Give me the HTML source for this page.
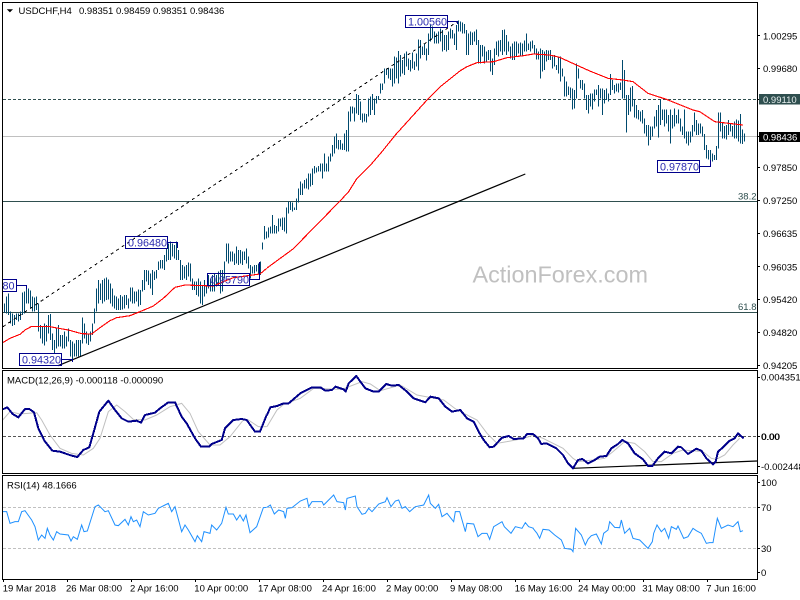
<!DOCTYPE html>
<html><head><meta charset="utf-8"><title>USDCHF,H4</title>
<style>
html,body{margin:0;padding:0;background:#fff;width:800px;height:600px;overflow:hidden}
svg{display:block}
text{font-family:"Liberation Sans",sans-serif;font-size:9.5px;fill:#000}
.bar{fill:none;stroke:#004a6e;stroke-width:3.01;shape-rendering:crispEdges}
.red{fill:none;stroke:#f00;stroke-width:3.4;shape-rendering:crispEdges}
.navy{fill:none;stroke:#00008b;stroke-width:6;stroke-linejoin:round;shape-rendering:crispEdges}
.sig{fill:none;stroke:#c0c0c0;stroke-width:3}
.rsi{fill:none;stroke:#1e90ff;stroke-width:3}
.frame{stroke:#000;stroke-width:1;shape-rendering:crispEdges;fill:none}
.lbl{fill:none;stroke:#00008b;stroke-width:1;shape-rendering:crispEdges}
.lt{font-size:10.8px;fill:#2b2bb0}
.fib{fill:#2f4f4f}
</style></head>
<body>
<svg width="800" height="600" viewBox="0 0 800 600" xmlns="http://www.w3.org/2000/svg">
<defs>
<clipPath id="m"><rect x="3" y="3" width="754" height="365"/></clipPath>
<clipPath id="s"><rect x="3" y="371" width="754" height="102"/></clipPath>
<clipPath id="r"><rect x="3" y="476" width="754" height="103"/></clipPath>
</defs>
<rect width="800" height="600" fill="#fff"/>

<g clip-path="url(#m)">
<!-- horizontal levels -->
<path d="M3 99.5H757" stroke="#2f4f4f" stroke-width="1" stroke-dasharray="3 2" shape-rendering="crispEdges"/>
<path d="M3 136.5H757" stroke="#c0c0c0" stroke-width="1" shape-rendering="crispEdges"/>
<path d="M3 201.5H757M3 312.5H757" stroke="#2f4f4f" stroke-width="1" shape-rendering="crispEdges"/>

<!-- bars -->
<g transform="translate(.5,200) scale(.33333333)"><path class="bar" d="M12 310V337M18 290V340M24 280V345M30 335V370M36 340V378M42 345V375M48 340V360M54 340V365M60 335V360M66 278V345M72 275V340M78 258V310M84 265V310M90 272V325M96 290V335M102 292V335M108 290V330M114 310V395M120 375V415M126 380V430M132 370V437M138 375V425M144 345V400M150 342V420M156 400V450M162 420V460M168 385V445M174 375V440M180 405V440M186 405V445M192 395V445M198 410V440M204 385V425M210 420V470M216 425V478M222 430V470M228 420V470M234 420V470M240 420V470M246 352V430M252 370V415M258 395V430M264 400V435M270 395V425M276 370V405M282 325V370M288 265V335M294 240V310M300 250V300M306 240V310M312 235V305M318 232V300M324 238V298M330 250V310M336 265V320M342 287V325M348 290V330M354 295V330M360 285V330M366 290V328M372 285V325M378 285V315M384 295V325M390 262V305M396 262V310M402 275V310M408 275V305M414 268V320M420 270V315M426 240V275M432 210V270M438 210V245M444 212V255M450 220V265M456 210V285M462 215V240M468 210V235M474 185V210M480 180V205M486 180V205M492 165V210M498 145V185M504 130V180M510 125V180M516 130V170M522 135V175M528 125V180M534 150V180M540 180V240M546 195V240M552 200V235M558 195V240M564 188V230M570 190V245M576 235V270M582 245V270M588 245V285M594 235V290M600 245V310M606 255V315M612 240V290M618 255V280M624 225V265M630 235V275M636 225V275M642 220V275M648 225V260M654 215V255M660 210V280M666 210V275M672 185V235M678 130V185M684 130V190M690 155V185M696 155V185M702 160V195M708 140V190M714 150V195M720 150V190M726 155V195M732 155V180M738 145V190M744 170V205M750 195V235M756 200V220M762 195V220M768 195V215M774 190V220M780 185V225"/></g>
<g transform="translate(251.1667,130) scale(.33333333)"><path class="bar" d="M34 338V358M40 288V328M46 305V325M52 292V322M58 290V310M64 255V310M70 285V310M76 288V310M82 265V305M88 265V290M94 262V300M100 262V305M106 232V310M112 215V250M118 215V240M124 218V245M130 232V240M136 205V240M142 175V218M148 155V195M154 160V195M160 150V175M166 145V175M172 130V178M178 130V170M184 115V165M190 108V130M196 112V128M202 108V125M208 100V125M214 100V145M220 70V125M226 100V125M232 80V125M238 70V95M244 45V80M250 20V70M256 10V55M262 30V58M268 30V58M274 40V60M280 10V60M286 0V65"/></g>
<g transform="translate(267.8333,0) scale(.33333333)"><path class="bar" d="M242 335V455M248 320V365M254 320V340M260 322V365M266 282V340M272 285V345M278 305V360M284 340V368M290 340V365M296 342V368M302 295V350M308 290V345M314 282V330M320 295V345M326 288V310M332 288V298M338 250V280M344 250V270M350 205V250M356 205V225M362 205V235M368 205V240M374 205V260M380 170V250M386 172V235M392 153V250M398 165V230M404 180V220M410 160V225M416 155V200M422 175V210M428 180V215M434 158V205M440 185V210M446 160V200M452 118V212M458 120V175M464 140V165M470 130V165M476 145V182M482 100V165M488 75V125M494 80V115M500 95V130M506 100V130M512 95V130M518 85V125M524 90V155M530 105V150M536 105V155M542 95V150M548 85V115M554 90V115M560 100V135M566 75V150M572 62V95M578 65V95M584 68V100M590 72V100M596 90V165M602 100V165M608 95V135M614 98V135M620 95V125M626 88V135M632 120V190M638 135V190M644 135V170M650 140V190M656 155V185M662 150V180M668 150V215M674 175V225M680 145V195M686 125V165M692 122V170M698 120V155M704 90V165M710 88V155M716 105V165M722 125V155M728 140V175M734 130V180M740 125V180M746 125V170M752 130V160M758 128V170M764 130V170M770 122V155M776 100V155M782 130V150M788 125V155M794 122V145"/></g>
<g transform="translate(534.5,0) scale(.33333333)"><path class="bar" d="M0 135V160M6 145V178M12 155V178M18 145V235M24 150V215M30 155V210M36 150V185M42 152V180M48 150V180M54 170V205M60 165V200M66 195V210M72 170V220M78 170V245M84 205V230M90 230V290M96 245V290M102 260V285M108 262V295M114 265V328M120 270V325M126 190V295M132 205V235M138 240V265M144 240V270M150 250V295M156 285V330M162 285V340M168 280V320M174 280V328M180 268V305M186 268V285M192 255V320M198 265V295M204 265V345M210 270V310M216 265V300M222 280V305M228 222V285M234 240V270M240 255V280M246 250V275M252 250V278M258 248V270M264 180V295M270 210V295M276 285V398M282 285V345M288 262V335M294 258V320M300 298V352M306 315V355M312 330V358M318 335V365M324 330V370M330 355V400M336 375V410M342 375V437M348 380V420M354 380V410M360 350V385M366 330V380M372 315V413M378 298V375M384 328V360M390 328V380M396 328V370M402 345V395M408 328V430M414 345V385M420 325V380M426 345V370M432 328V370M438 355V395M444 380V405M450 328V415M456 395V430M462 395V437M468 395V428M474 375V410M480 338V395M486 360V405M492 370V405M498 370V400M504 380V410M510 402V450M516 435V475M522 450V478M528 450V495M534 460V485M540 465V480M546 438V480M552 338V445M558 338V395M564 368V415M570 378V415M576 375V418M582 360V405M588 370V395M594 378V410M600 365V415M606 358V415M612 362V425M618 342V430M624 388V432M630 400V425"/></g>

<!-- red MA -->
<g transform="translate(0,200) scale(.33333333)"><polyline class="red" points="8,428 30,415 60,403 75,390 95,379 145,379 165,383 205,390 245,401 275,402 300,383 330,362 350,353 390,347 420,335 460,318 490,295 525,262 555,255 640,258 670,245 700,233 780,222 800,205"/></g>
<g transform="translate(267,0) scale(.33333333)"><polyline class="red" points="0,804 78,747 222,600 245,575 270,535 315,490 345,455 385,405 480,300 520,260 580,212 600,200 630,188 680,185 720,173 770,167 800,162"/></g>
<g transform="translate(533,0) scale(.33333333)"><polyline class="red" points="0,162 50,165 80,172 130,195 175,215 225,235 270,240 300,245 345,280 400,298 450,318 480,330 500,335 545,365 570,368 630,375"/></g>

<!-- trendlines -->
<path d="M3 326.7L457.3 21.7" stroke="#000" stroke-width="1" stroke-dasharray="3 3.5" fill="none" shape-rendering="crispEdges"/>
<path d="M58 365.7L525.3 174" stroke="#000" stroke-width="1.2" fill="none"/>

<!-- labels -->
<path class="lbl" d="M447.5 21.5H457.5V24M700 166.5H710.5V160M167.5 242.5H177.5V248M249.5 279.5H259.5V262M61.5 359.5H72.5V362M16.5 285.5H26.5V289"/>
<rect class="lbl" x="405.5" y="15.5" width="42" height="12"/><text class="lt" x="408" y="25.5">1.00560</text>
<rect class="lbl" x="657.5" y="160.5" width="42" height="12"/><text class="lt" x="660" y="170.5">0.97870</text>
<rect class="lbl" x="125.5" y="236.5" width="42" height="12"/><text class="lt" x="128" y="246.5">0.96480</text>
<rect class="lbl" x="207.5" y="273.5" width="42" height="12"/><text class="lt" x="210" y="283.5">0.95790</text>
<rect class="lbl" x="19.5" y="353.5" width="42" height="12"/><text class="lt" x="22" y="363.5">0.94320</text>
<path class="lbl" d="M3 279.5H16.5V291.5H3"/><text class="lt" x="14.5" y="289.5" text-anchor="end">80</text>

<text class="fib" x="738" y="199.5">38.2</text>
<text class="fib" x="738" y="310">61.8</text>

<text x="472.5" y="282.3" style="font-size:23.4px;fill:#c0c0c0">ActionForex.com</text>

<path d="M6.8 9.2H13L9.9 12.4Z" fill="#000"/>
<text x="18.5" y="14">USDCHF,H4</text>
<text x="79" y="14">0.98351 0.98459 0.98351 0.98436</text>
</g>

<!-- MACD -->
<g clip-path="url(#s)">
<path d="M3 436.5H757" stroke="#555" stroke-width="1" stroke-dasharray="3 2" shape-rendering="crispEdges"/>
<path d="M573 468.3L757 461" stroke="#000" stroke-width="1.2" fill="none"/>
<g transform="translate(0,370) scale(.33333333)">
<polyline class="sig" points="8,150 30,125 60,132 110,128 125,150 150,195 180,235 215,250 250,255 280,235 300,205 325,125 350,105 375,125 400,148 435,150 470,135 510,110 545,100 570,130 595,185 630,225 660,225 690,200 730,150 745,150 775,170 800,170"/>
<polyline class="navy" points="8,118 22,112 38,132 55,142 75,117 88,117 102,127 115,175 133,212 157,242 180,245 212,256 232,261 250,240 268,232 280,190 298,125 325,92 345,120 365,145 385,155 410,152 423,158 435,135 465,128 480,115 505,97 525,97 545,140 560,160 585,205 603,230 628,230 635,222 665,210 675,175 700,150 725,147 740,150 765,185 780,185 800,135"/>
</g>
<g transform="translate(267,370) scale(.33333333)">
<polyline class="sig" points="0,170 30,120 50,103 100,85 140,55 225,58 285,35 310,42 340,62 400,45 450,75 530,90 570,120 630,150 660,190 690,220 720,215 770,205 800,195"/>
<polyline class="navy" points="0,135 10,112 30,108 50,100 65,100 100,70 135,52 160,52 175,62 195,60 205,50 230,58 236,65 245,40 268,18 280,35 295,55 320,65 335,65 358,42 375,47 395,45 420,65 440,85 475,97 490,80 515,85 535,110 555,125 580,120 600,145 620,155 635,185 650,210 668,232 680,230 705,203 725,198 740,207 770,205 780,192 800,192"/>
</g>
<g transform="translate(533,370) scale(.33333333)">
<polyline class="sig" points="0,195 30,205 60,220 90,235 120,265 135,275 180,270 215,265 240,245 275,215 305,220 335,245 360,275 385,275 420,250 450,240 510,245 535,265 550,268 575,255 600,225 620,205"/>
<polyline class="navy" points="0,192 15,205 25,222 40,220 70,235 90,255 105,280 120,295 135,270 148,267 165,280 185,270 200,260 220,258 235,235 255,222 268,210 285,220 305,250 330,268 345,288 358,288 375,265 395,245 415,250 435,230 445,232 465,252 490,236 505,242 520,265 540,283 548,275 555,245 570,232 590,212 605,205 615,190 632,205"/>
</g>
<text x="7" y="383.5">MACD(12,26,9) -0.000118 -0.000090</text>
</g>

<!-- RSI -->
<g clip-path="url(#r)">
<path d="M3 507.5H757M3 548.5H757" stroke="#c0c0c0" stroke-width="1" stroke-dasharray="3 2" shape-rendering="crispEdges"/>
<g transform="translate(0,370) scale(.33333333)"><polyline class="rsi" points="8,425 20,425 30,460 45,455 55,455 65,425 75,422 95,450 105,470 115,510 125,495 135,505 142,475 150,495 160,510 170,485 180,492 205,495 213,513 220,500 232,508 245,465 252,485 262,483 285,410 295,405 305,415 315,425 325,422 345,465 355,467 375,448 385,465 393,440 400,455 410,450 420,470 430,425 445,435 465,430 475,415 495,405 505,400 515,425 525,410 545,485 555,465 565,480 585,515 592,497 605,515 612,485 630,490 635,465 650,480 665,460 678,412 685,432 700,432 710,450 720,435 730,453 738,435 750,488 770,470 790,413 800,412"/></g>
<g transform="translate(267,370) scale(.33333333)"><polyline class="rsi" points="0,412 10,405 22,432 35,420 50,425 55,445 60,415 75,413 100,393 120,385 125,410 135,395 165,395 170,405 200,375 210,395 230,398 235,420 240,385 265,378 270,410 285,433 295,430 305,415 315,425 335,402 355,395 360,383 372,410 385,393 395,390 405,415 415,410 428,425 445,410 470,405 485,375 490,400 505,415 515,403 525,440 540,430 560,455 565,425 578,425 595,485 600,460 620,462 633,500 645,490 660,490 668,508 680,470 705,455 712,470 732,490 745,470 765,475 775,458 785,470 800,475"/></g>
<g transform="translate(533,370) scale(.33333333)"><polyline class="rsi" points="0,475 12,490 20,505 30,478 48,480 65,495 85,510 95,535 115,538 120,545 128,475 145,495 157,525 165,508 175,497 190,492 205,522 212,490 225,480 230,455 245,472 260,473 265,450 275,490 290,475 300,505 320,510 345,535 358,515 362,490 372,465 385,485 395,475 407,505 415,470 430,478 435,468 445,490 452,505 465,500 480,475 490,482 505,490 520,520 530,518 540,518 545,490 553,445 565,475 585,465 600,470 615,455 622,485 630,482"/></g>
<text x="7" y="488.5">RSI(14) 48.1666</text>
</g>

<!-- frames -->
<path class="frame" d="M2.5 2.5H757.5V368.5H2.5ZM2.5 370.5H757.5V473.5H2.5ZM2.5 475.5H757.5V579.5H2.5Z"/>
<!-- ticks -->
<path class="frame" d="M757 35.5h3M757 68.5h3M757 99.5h3M757 136.5h3M757 167.5h3M757 200.5h3M757 233.5h3M757 266.5h3M757 299.5h3M757 332.5h3M757 365.5h3M757 377.5h3M757 436.5h3M757 466.5h3M757 482.5h3M757 507.5h3M757 548.5h3M757 572.5h3M3.5 579v3M67.5 579v3M131.5 579v3M195.5 579v3M259.5 579v3M323.5 579v3M387.5 579v3M451.5 579v3M515.5 579v3M579.5 579v3M643.5 579v3M707.5 579v3"/>

<!-- price axis -->
<text x="763" y="39.3">1.00295</text>
<text x="763" y="71.8">0.99680</text>
<rect x="759" y="94" width="41" height="10.5" fill="#2f4f4f"/>
<text x="763" y="102.8" style="fill:#e8efef">0.99110</text>
<rect x="759" y="132" width="41" height="10" fill="#000"/>
<text x="763" y="140.3" style="fill:#fff">0.98436</text>
<text x="763" y="170.8">0.97850</text>
<text x="763" y="204">0.97250</text>
<text x="763" y="237">0.96635</text>
<text x="763" y="270.3">0.96035</text>
<text x="763" y="303">0.95420</text>
<text x="763" y="336">0.94820</text>
<text x="763" y="368.8">0.94205</text>
<text x="761" y="380.5">0.004351</text>
<text x="761" y="440">0.00</text>
<text x="761.5" y="440">0.00</text>
<text x="761" y="470">-0.002448</text>
<text x="761" y="486">100</text>
<text x="761" y="511">70</text>
<text x="761" y="552">30</text>
<text x="761" y="576">0</text>

<!-- time axis -->
<text x="2.7" y="591.5">19 Mar 2018</text>
<text x="66" y="591.5">26 Mar 08:00</text>
<text x="130" y="591.5">2 Apr 16:00</text>
<text x="194.3" y="591.5">10 Apr 00:00</text>
<text x="258" y="591.5">17 Apr 08:00</text>
<text x="322" y="591.5">24 Apr 16:00</text>
<text x="386" y="591.5">2 May 00:00</text>
<text x="450" y="591.5">9 May 08:00</text>
<text x="514.7" y="591.5">16 May 16:00</text>
<text x="578" y="591.5">24 May 00:00</text>
<text x="642.3" y="591.5">31 May 08:00</text>
<text x="706.3" y="591.5">7 Jun 16:00</text>
</svg>
</body></html>
